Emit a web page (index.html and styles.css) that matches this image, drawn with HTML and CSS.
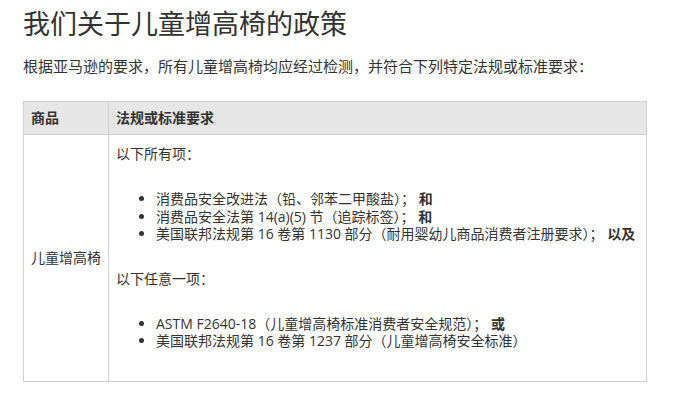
FILE: index.html
```html
<!DOCTYPE html>
<html lang="zh-CN">
<head>
<meta charset="utf-8">
<title>我们关于儿童增高椅的政策</title>
<link rel="stylesheet" href="styles.css">
</head>
<body>
<div class="page">
  <h1 class="title">我们关于儿童增高椅的政策</h1>
  <p class="lead">根据亚马逊的要求，所有儿童增高椅均应经过检测，并符合下列特定法规或标准要求：</p>
  <table class="policy">
    <thead>
      <tr>
        <th class="col-product">商品</th>
        <th class="col-req">法规或标准要求</th>
      </tr>
    </thead>
    <tbody>
      <tr>
        <td class="cell-product">儿童增高椅</td>
        <td class="cell-req">
          <p class="req-intro">以下所有项：</p>
          <ul class="req-list">
            <li>消费品安全改进法（铅、邻苯二甲酸盐）； <strong>和</strong></li>
            <li>消费品安全法第 14(a)(5) 节（追踪标签）； <strong>和</strong></li>
            <li>美国联邦法规第 16 卷第 1130 部分（耐用婴幼儿商品消费者注册要求）； <strong>以及</strong></li>
          </ul>
          <p class="req-intro">以下任意一项：</p>
          <ul class="req-list last">
            <li>ASTM F2640-18（儿童增高椅标准消费者安全规范）； <strong>或</strong></li>
            <li>美国联邦法规第 16 卷第 1237 部分（儿童增高椅安全标准）</li>
          </ul>
        </td>
      </tr>
    </tbody>
  </table>
</div>
</body>
</html>
```

FILE: styles.css
```css
html, body {
  margin: 0;
  padding: 0;
  background: #ffffff;
}

body {
  font-family: "Open Sans", "Noto Sans CJK SC", sans-serif;
  color: #333333;
}

.page {
  padding: 0 23px;
}

.title {
  margin: 8px 0 0;
  font-size: 27px;
  line-height: 32px;
  font-weight: 400;
  color: #333333;
}

.lead {
  margin: 16px 0 25px;
  font-size: 15px;
  line-height: 20px;
}

.policy {
  width: 624px;
  border-collapse: collapse;
  font-size: 14px;
  line-height: 17.4px;
}

.policy th,
.policy td {
  border: 1px solid #d0d0d0;
  text-align: left;
}

.policy th {
  background: #e6e6e6;
  font-weight: 700;
  padding: 7px 7px 7px;
  line-height: 18px;
}

.col-product {
  width: 70px;
}

.cell-product {
  vertical-align: middle;
  padding: 0 7px;
}

.cell-req {
  vertical-align: top;
  padding: 10px 7px 31px;
}

.req-intro {
  margin: 0 0 28px;
}

.req-list {
  margin: 0 0 27px;
  padding-left: 40px;
}

.req-list.last {
  margin-bottom: 0;
}

.req-list strong {
  font-weight: 700;
}
```
